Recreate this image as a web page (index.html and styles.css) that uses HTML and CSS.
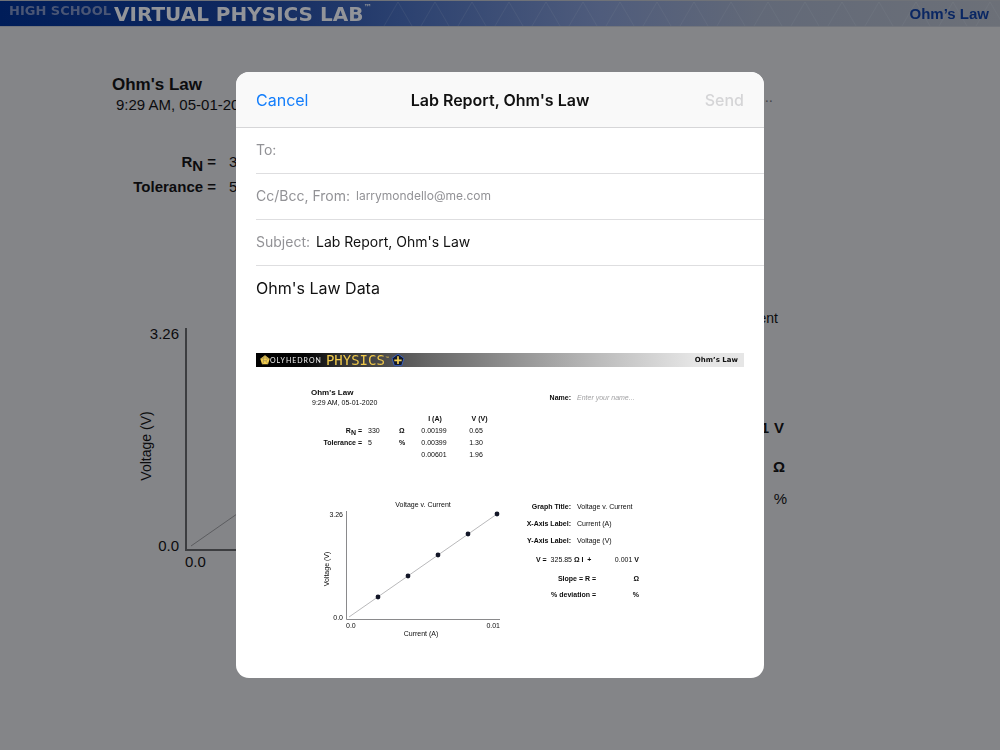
FILE: index.html
```html
<!DOCTYPE html>
<html lang="en">
<head>
<meta charset="utf-8">
<title>Lab Report, Ohm's Law</title>
<link rel="stylesheet" href="styles.css">
</head>
<body>
<header class="topbar">
  <svg class="topbar-pattern" aria-hidden="true">
    <defs><pattern id="tri" width="37" height="25" patternUnits="userSpaceOnUse"><path d="M4 25L18 1L32 25" fill="none" stroke="#8f95a2" stroke-opacity=".12"/></pattern></defs>
    <rect width="100%" height="100%" fill="url(#tri)"/>
  </svg>
  <div class="brand">
    <span class="brand-small">HIGH SCHOOL</span>
    <span class="brand-big">VIRTUAL PHYSICS LAB</span>
    <span class="brand-tm">™</span>
  </div>
  <span class="topbar-title">Ohm’s Law</span>
</header>

<main class="lab">
  <section class="lab-intro">
    <h1>Ohm's Law</h1>
    <p class="lab-date">9:29 AM, 05-01-2020</p>
    <div class="lab-params">
      <span class="key">R<span class="low">N</span> =</span><span>330</span>
      <span class="key">Tolerance =</span><span>5</span>
    </div>
  </section>
  <p class="lab-name">...</p>
  <svg class="lab-chart" viewBox="0 0 400 260" role="img" aria-label="Voltage against current">
    <path d="M74 18V240H392" class="lab-axis"/>
    <path d="M79 236L392 18" class="lab-line"/>
    <text x="67" y="29" text-anchor="end" class="big">3.26</text>
    <text x="67" y="241" text-anchor="end" class="big">0.0</text>
    <text x="73" y="257" class="big">0.0</text>
    <text transform="translate(39 136) rotate(-90)" text-anchor="middle">Voltage (V)</text>
  </svg>
  <section class="lab-results">
    <p class="lab-graph-title">Voltage v. Current</p>
    <p class="lab-eq"><b>0.001</b><b>V</b></p>
    <p class="lab-slope"><b>Ω</b></p>
    <p class="lab-dev">%</p>
  </section>
</main>

<div class="overlay">
  <form class="sheet" role="dialog" aria-labelledby="sheet-title">
    <header class="sheet-head">
      <button type="button" class="cancel">Cancel</button>
      <h2 id="sheet-title">Lab Report, Ohm's Law</h2>
      <button type="button" class="send" disabled>Send</button>
    </header>
    <div class="field"><label for="to">To:</label><input id="to" type="text"></div>
    <div class="field"><label for="from">Cc/Bcc, From:</label><input id="from" class="from" type="text" value="larrymondello@me.com"></div>
    <div class="field"><label for="subject">Subject:</label><input id="subject" type="text" value="Lab Report, Ohm's Law"></div>
    <div class="message">
      <p>Ohm's Law Data</p>
      <article class="report">
        <header class="report-bar">
          <div class="report-brand">
            <svg width="10" height="10" viewBox="0 0 30 30" aria-hidden="true"><path d="M15 1L29 11L24 28H6L1 11Z" fill="#f3cd4c"/><path d="M10 24V9H17Q22 9 22 13Q22 17 17 17H10M2 12L10 9L15 2L22 9L28 12M10 24L6 27M17 17L24 27" fill="none" stroke="#9a8b57" stroke-width="2"/></svg>
            <span class="poly">OLYHEDRON</span>
            <span class="phys">PHYSICS</span>
            <span class="phys-tm">™</span>
            <svg width="14" height="14" viewBox="0 0 42 42" aria-hidden="true"><path d="M21 3L39 16L32 38H10L3 16Z" fill="#11182b" stroke="#3e63c0" stroke-width="3" stroke-linejoin="round"/><path d="M21 10V33M10 22H32" stroke="#f3cf50" stroke-width="5"/></svg>
          </div>
          <span class="report-name">Ohm’s Law</span>
        </header>
        <div class="report-body">
          <section>
            <h3>Ohm's Law</h3>
            <p class="date">9:29 AM, 05-01-2020</p>
            <div class="tables">
              <table class="params">
                <tr><th scope="row">R<span class="low">N</span> =</th><td>330</td><td>Ω</td></tr>
                <tr><th scope="row">Tolerance =</th><td>5</td><td>%</td></tr>
              </table>
              <table class="data">
                <tr><th scope="col">I (A)</th><th scope="col">V (V)</th></tr>
                <tr><td>0.00199</td><td>0.65</td></tr>
                <tr><td>0.00399</td><td>1.30</td></tr>
                <tr><td>0.00601</td><td>1.96</td></tr>
              </table>
            </div>
          </section>
          <dl class="pairs name"><dt>Name:</dt><dd>Enter your name...</dd></dl>
          <svg class="chart" viewBox="0 0 190 142" role="img" aria-label="Voltage v. Current">
            <text x="101" y="9" text-anchor="middle">Voltage v. Current</text>
            <path d="M24.500 13V121.500H178" fill="none" stroke="#8a8a8c"/>
            <path d="M27 119L175 16" stroke="#b9b9bb" fill="none"/>
            <g fill="#121627"><circle cx="56" cy="99" r="2.400"/><circle cx="86" cy="78" r="2.400"/><circle cx="116" cy="57" r="2.400"/><circle cx="146" cy="36" r="2.400"/><circle cx="175" cy="16" r="2.400"/></g>
            <text x="21" y="19" text-anchor="end">3.26</text>
            <text x="21" y="122" text-anchor="end">0.0</text>
            <text x="24" y="130">0.0</text>
            <text x="178" y="130" text-anchor="end">0.01</text>
            <text x="99" y="138" text-anchor="middle">Current (A)</text>
            <text transform="translate(7 71) rotate(-90)" text-anchor="middle">Voltage (V)</text>
          </svg>
          <section>
            <dl class="pairs">
              <dt>Graph Title:</dt><dd>Voltage v. Current</dd>
              <dt>X-Axis Label:</dt><dd>Current (A)</dd>
              <dt>Y-Axis Label:</dt><dd>Voltage (V)</dd>
            </dl>
            <div class="fit">
              <p><span><b>V =</b>&nbsp; 325.85 <b>Ω I &nbsp;+</b></span><span>0.001 <b>V</b></span></p>
              <p class="gapped"><b class="lead">Slope = R =</b><b>Ω</b></p>
              <p><b class="lead">% deviation =</b><b>%</b></p>
            </div>
          </section>
        </div>
      </article>
    </div>
  </form>
</div>
</body>
</html>
```

FILE: styles.css
```css
* { box-sizing: border-box; }
body, h1, h2, h3, p, dl, dd { margin: 0; }
body {
  min-height: 100vh;
  background: #848588;
  color: #0c0c0e;
  font-family: "Liberation Sans", Arial, sans-serif;
}

.topbar {
  position: relative;
  display: flex;
  align-items: center;
  justify-content: space-between;
  height: 27px;
  padding: 0 11px 0 9px;
  border-top: 1px solid #6f7278;
  border-bottom: 1px solid #73767d;
  background: linear-gradient(90deg, #001d59 0, #10295f 25%, #2b4170 40%, #4f5c7c 60%, #626978 76%, #6c7078 100%);
}
.topbar-pattern {
  position: absolute;
  top: 0;
  right: 0;
  width: 62%;
  height: 100%;
}
.brand { display: flex; font-family: "DejaVu Sans", sans-serif; font-weight: 700; line-height: 24px; z-index: 1; }
.brand-small { font-size: 13px; line-height: 18px; color: #4a5675; margin-right: 3px; }
.brand-big { font-size: 20px; color: #929499; }
.brand-tm { font-size: 8px; line-height: 12px; color: #929499; }
.topbar-title { z-index: 1; font-size: 15px; font-weight: 700; color: #0a2763; }

.lab {
  display: grid;
  grid-template-columns: 1fr auto;
  row-gap: 111px;
  padding: 47px 213px 0 112px;
  font-size: 15px;
}
.lab h1 { font-size: 17px; line-height: 22px; }
.lab-date { padding-left: 4px; line-height: 18px; }
.lab-params {
  display: grid;
  grid-template-columns: 104px auto;
  gap: 0 13px;
  margin-top: 35px;
  line-height: 25px;
}
.key { font-weight: 700; text-align: right; white-space: nowrap; }
.low { position: relative; top: 4px; }
.lab-name { padding: 14px 14px 0 0; color: #46474a; text-align: right; }
.lab-chart { width: 400px; height: 260px; font-size: 14px; fill: #0c0c0e; }
.lab-chart .big { font-size: 15px; }
.lab-axis { fill: none; stroke: #3c3d40; stroke-width: 2; }
.lab-line { fill: none; stroke: #5c5d60; }
.lab-results { text-align: right; line-height: 32px; }
.lab-graph-title { font-size: 14px; line-height: 17px; padding-right: 9px; }
.lab-eq { display: flex; gap: 5px; justify-content: flex-end; padding: 85px 3px 0 0; }
.lab-slope { padding: 7px 2px 0 0; }

.overlay {
  position: fixed;
  inset: 0;
  display: flex;
  align-items: center;
  justify-content: center;
}
.sheet {
  width: 528px;
  max-width: 100%;
  border-radius: 13px;
  overflow: hidden;
  background: #fff;
  color: #111;
  font-family: Inter, sans-serif;
  font-size: 15px;
}
.sheet-head {
  display: grid;
  grid-template-columns: 1fr auto 1fr;
  align-items: center;
  height: 56px;
  padding: 0 20px;
  background: #f9f9f9;
  border-bottom: 1px solid #d6d6d8;
}
.sheet-head h2 { font-size: 16px; font-weight: 600; }
.sheet button { padding: 0; border: 0; background: none; font: inherit; font-size: 16px; }
.cancel { color: #147efb; justify-self: start; }
.sheet .send { color: #d5d5d7; justify-self: end; font-weight: 500; }
.field {
  display: flex;
  align-items: center;
  gap: 6px;
  height: 46px;
  margin-left: 20px;
  padding-bottom: 2px;
  border-bottom: 1px solid #dedee0;
}
.field label { color: #929296; font-size: 14px; }
.field input { flex: 1; min-width: 0; padding: 0; border: 0; outline: 0; background: none; font: inherit; font-size: 14px; color: #111; }
.field .from { font-size: 12px; color: #929296; }
.message { padding: 11px 20px 38px; }
.message > p { font-size: 16px; line-height: 22px; }

.report {
  margin-top: 54px;
  color: #0c0c0c;
  font-family: "Liberation Sans", Arial, sans-serif;
  font-size: 7px;
}
.report-bar {
  display: flex;
  align-items: center;
  justify-content: space-between;
  height: 14px;
  padding: 0 6px 0 4px;
  background: linear-gradient(90deg, #000 0, #050505 10%, #333 18%, #666 35%, #8b8b8b 50%, #bbb 70%, #e6e6e6 90%);
}
.report-brand { display: flex; align-items: center; }
.poly { font-family: Lato, sans-serif; font-size: 7px; letter-spacing: 1px; color: #f2f2f2; margin-right: 4px; }
.phys { font-family: "DejaVu Sans Mono", monospace; font-size: 14px; line-height: 14px; color: #efc84a; }
.phys-tm { width: 6px; font-size: 4px; line-height: 10px; align-self: flex-start; color: #efc84a; }
.report-name { font-family: "DejaVu Sans", sans-serif; font-weight: 700; color: #111; }
.report-body {
  display: grid;
  grid-template-columns: 211px 1fr;
  row-gap: 37px;
  padding: 21px 0 0 55px;
}
.report h3 { font-size: 8px; line-height: 10px; }
.date { padding-left: 1px; line-height: 10px; }
.tables { display: flex; margin-top: 5px; }
.tables table { border-collapse: collapse; line-height: 12px; }
.tables th, .tables td { padding: 0; height: 12px; }
.params { align-self: flex-start; margin: 12px 0 0 9px; }
.params th { width: 42px; text-align: right; white-space: nowrap; }
.params td { padding-left: 6px; width: 31px; }
.params .low { top: 2px; }
.params td:last-child { width: 20px; font-weight: 700; }
.data th, .data td { width: 42px; text-align: center; }
.data th { padding-left: 2px; }
.data th:last-child { padding-left: 7px; }
.pairs { display: grid; grid-template-columns: 49px 1fr; gap: 0 6px; line-height: 17px; align-content: start; }
.pairs dt { font-weight: 700; text-align: right; white-space: nowrap; }
.name { line-height: 20px; }
.name dd { font-style: italic; color: #a2a2a4; }
.chart { width: 190px; height: 142px; margin-left: 11px; fill: #0c0c0c; }
.fit { width: 117px; padding-top: 3px; line-height: 16px; }
.fit p { display: flex; justify-content: space-between; padding-left: 14px; }
.fit .gapped { margin-top: 3px; }
.fit .lead { width: 60px; text-align: right; white-space: nowrap; }
```
